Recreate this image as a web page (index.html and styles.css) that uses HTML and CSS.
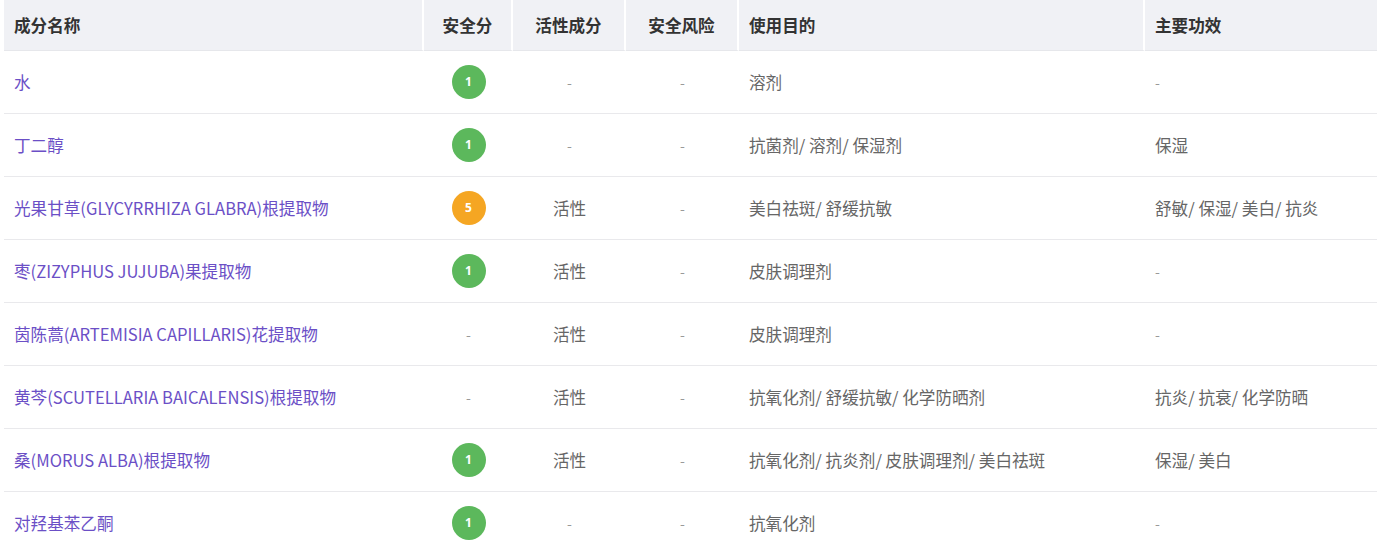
FILE: index.html
```html
<!DOCTYPE html>
<html lang="zh-CN">
<head>
<meta charset="utf-8">
<title>成分表</title>
<link rel="stylesheet" href="styles.css">
</head>
<body>
<table class="ing-table">
  <colgroup>
    <col class="c-name"><col class="c-score"><col class="c-active"><col class="c-risk"><col class="c-use"><col class="c-effect">
  </colgroup>
  <thead>
    <tr>
      <th class="left">成分名称</th>
      <th>安全分</th>
      <th>活性成分</th>
      <th>安全风险</th>
      <th class="left">使用目的</th>
      <th class="left last">主要功效</th>
    </tr>
  </thead>
  <tbody>
    <tr>
      <td class="left name">水</td>
      <td><span class="badge green">1</span></td>
      <td class="dash">-</td>
      <td class="dash">-</td>
      <td class="left">溶剂</td>
      <td class="left dash">-</td>
    </tr>
    <tr>
      <td class="left name">丁二醇</td>
      <td><span class="badge green">1</span></td>
      <td class="dash">-</td>
      <td class="dash">-</td>
      <td class="left">抗菌剂/ 溶剂/ 保湿剂</td>
      <td class="left">保湿</td>
    </tr>
    <tr>
      <td class="left name">光果甘草(GLYCYRRHIZA GLABRA)根提取物</td>
      <td><span class="badge orange">5</span></td>
      <td>活性</td>
      <td class="dash">-</td>
      <td class="left">美白祛斑/ 舒缓抗敏</td>
      <td class="left">舒敏/ 保湿/ 美白/ 抗炎</td>
    </tr>
    <tr>
      <td class="left name">枣(ZIZYPHUS JUJUBA)果提取物</td>
      <td><span class="badge green">1</span></td>
      <td>活性</td>
      <td class="dash">-</td>
      <td class="left">皮肤调理剂</td>
      <td class="left dash">-</td>
    </tr>
    <tr>
      <td class="left name">茵陈蒿(ARTEMISIA CAPILLARIS)花提取物</td>
      <td class="dash">-</td>
      <td>活性</td>
      <td class="dash">-</td>
      <td class="left">皮肤调理剂</td>
      <td class="left dash">-</td>
    </tr>
    <tr>
      <td class="left name">黄芩(SCUTELLARIA BAICALENSIS)根提取物</td>
      <td class="dash">-</td>
      <td>活性</td>
      <td class="dash">-</td>
      <td class="left">抗氧化剂/ 舒缓抗敏/ 化学防晒剂</td>
      <td class="left">抗炎/ 抗衰/ 化学防晒</td>
    </tr>
    <tr>
      <td class="left name">桑(MORUS ALBA)根提取物</td>
      <td><span class="badge green">1</span></td>
      <td>活性</td>
      <td class="dash">-</td>
      <td class="left">抗氧化剂/ 抗炎剂/ 皮肤调理剂/ 美白祛斑</td>
      <td class="left">保湿/ 美白</td>
    </tr>
    <tr>
      <td class="left name">对羟基苯乙酮</td>
      <td><span class="badge green">1</span></td>
      <td class="dash">-</td>
      <td class="dash">-</td>
      <td class="left">抗氧化剂</td>
      <td class="left dash">-</td>
    </tr>
  </tbody>
</table>
</body>
</html>
```

FILE: styles.css
```css
html, body {
  margin: 0;
  padding: 0;
  background: #ffffff;
}
body {
  padding-left: 4px;
  font-family: "Noto Sans CJK SC", "Noto Sans", sans-serif;
  font-size: 16.6px;
  color: #666666;
}
.ing-table {
  width: 1373px;
  table-layout: fixed;
  border-collapse: separate;
  border-spacing: 0;
}
.c-name { width: 420px; }
.c-score { width: 89px; }
.c-active { width: 113px; }
.c-risk { width: 113px; }
.c-use { width: 406px; }
.c-effect { width: 232px; }

.ing-table th {
  height: 51px;
  padding: 0 10px;
  background: #f0f1f5;
  color: #333333;
  font-weight: 700;
  font-size: 16.6px;
  text-align: center;
  vertical-align: middle;
  border-right: 2px solid #ffffff;
  border-bottom: 1px solid #e6e7eb;
  box-sizing: border-box;
  white-space: nowrap;
}
.ing-table th.last { border-right: none; }
.ing-table td {
  height: 63px;
  padding: 0 10px;
  text-align: center;
  vertical-align: middle;
  border-bottom: 1px solid #e9e9ec;
  box-sizing: border-box;
  white-space: nowrap;
  line-height: 20px;
}
.ing-table .left { text-align: left; }
.ing-table td.name { color: #6b4fc6; }
.ing-table td.dash { color: #999999; font-size: 14px; }

.badge {
  display: inline-flex;
  align-items: center;
  justify-content: center;
  width: 34px;
  height: 34px;
  border-radius: 50%;
  color: #ffffff;
  font-size: 12px;
  font-weight: 700;
  font-family: "Noto Sans", sans-serif;
  vertical-align: middle;
}
.badge.green { background: #5cb85c; }
.badge.orange { background: #f5a623; }
```
